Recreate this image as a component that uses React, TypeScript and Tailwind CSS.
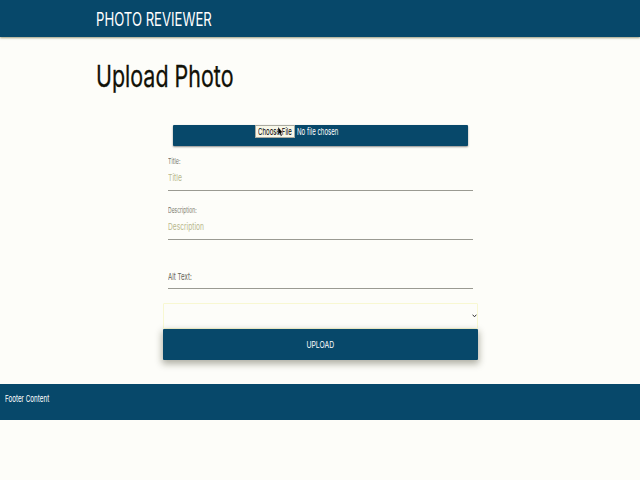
import type { ReactNode } from "react";

function Narrow({ children, className = "" }: { children: ReactNode; className?: string }) {
  return <span className={`inline-block origin-left whitespace-nowrap ${className}`}>{children}</span>;
}

function Cursor() {
  return (
    <svg className="absolute left-[21px] top-0 h-[11px] w-[7px]" viewBox="0 0 7 11">
      <path d="M1 .8v8l1.6-1.5 1.2 2.9 1.4-.6L4 6.8h2z" fill="#000" stroke="#fff" strokeWidth=".4" />
    </svg>
  );
}

export default function App() {
  return (
    <div className="h-[480px] w-[640px] overflow-hidden bg-[#fdfdf9] font-['Inter','Liberation_Sans',sans-serif] text-[#111107]">
      <header className="h-[37px] bg-[#07486a] pl-24 text-[18px] leading-[39px] text-white shadow-[0_1px_2px_rgba(90,90,40,0.6)]">
        <Narrow className="scale-x-[0.73]">PHOTO REVIEWER</Narrow>
      </header>
      <h1 className="h-[88px] pl-24 pt-[20px] text-[30px] leading-[38px]">
        <Narrow className="scale-x-[0.715] [-webkit-text-stroke:0.3px]">Upload Photo</Narrow>
      </h1>
      <main className="ml-[162.5px] h-[259px] w-[315px]">
        <div className="ml-[10px] flex h-[21px] w-[295px] items-start rounded-[1px] bg-[#07486a] pl-[82px] shadow-[0_1px_2px_rgba(0,0,0,0.45)]">
          <button className="relative h-[13px] w-[40px] border border-[#aaaaa0] bg-[#f7f7e8] pl-[2px] text-left text-[9.5px] leading-[12px] text-black">
            <Narrow className="scale-x-[0.64]">Choose File</Narrow>
            <Cursor />
          </button>
          <span className="ml-[2px] text-[9.5px] leading-[13px] text-white">
            <Narrow className="scale-x-[0.64]">No file chosen</Narrow>
          </span>
        </div>
        <div className="ml-[5px] w-[305px]">
          <div className="h-[45px] border-b border-[#9a9a92] pt-[10px]">
            <div className="h-[12px] text-[7.5px] leading-[12px] text-[#77776a]">
              <Narrow className="scale-x-[0.72]">Title:</Narrow>
            </div>
            <div className="h-[20px] text-[9.5px] leading-[20px] text-[#b9b98e]">
              <Narrow className="scale-x-[0.72]">Title</Narrow>
            </div>
          </div>
          <div className="h-[49px] border-b border-[#9a9a92] pt-[14px]">
            <div className="h-[12px] text-[7.5px] leading-[12px] text-[#77776a]">
              <Narrow className="scale-x-[0.67]">Description:</Narrow>
            </div>
            <div className="h-[20px] text-[9.5px] leading-[20px] text-[#b9b98e]">
              <Narrow className="scale-x-[0.7]">Description</Narrow>
            </div>
          </div>
          <div className="h-[49px] border-b border-[#9a9a92] pt-[26px] text-[9.5px] leading-[21px] text-[#66665a]">
            <Narrow className="scale-x-[0.65]">Alt Text:</Narrow>
          </div>
        </div>
        <div className="mt-[14px] flex h-[26px] items-center justify-end rounded-[1px] border border-[#f8f8d2]">
          <svg className="h-[4px] w-[5px]" viewBox="0 0 5 4">
            <path d="M.6.7 2.5 2.8 4.4.7" fill="none" stroke="#333" strokeWidth="1" />
          </svg>
        </div>
        <button className="flex h-[31px] w-full items-center justify-center rounded-[1px] bg-[#07486a] pt-px text-[9.5px] text-white shadow-[0_3px_7px_1px_rgba(40,40,15,0.36)]">
          <span className="inline-block scale-x-[0.72]">UPLOAD</span>
        </button>
      </main>
      <footer className="h-[36px] bg-[#07486a] pl-[5px] pt-[4px] text-[9.5px] leading-[21px] text-white">
        <Narrow className="scale-x-[0.66]">Footer Content</Narrow>
      </footer>
    </div>
  );
}
